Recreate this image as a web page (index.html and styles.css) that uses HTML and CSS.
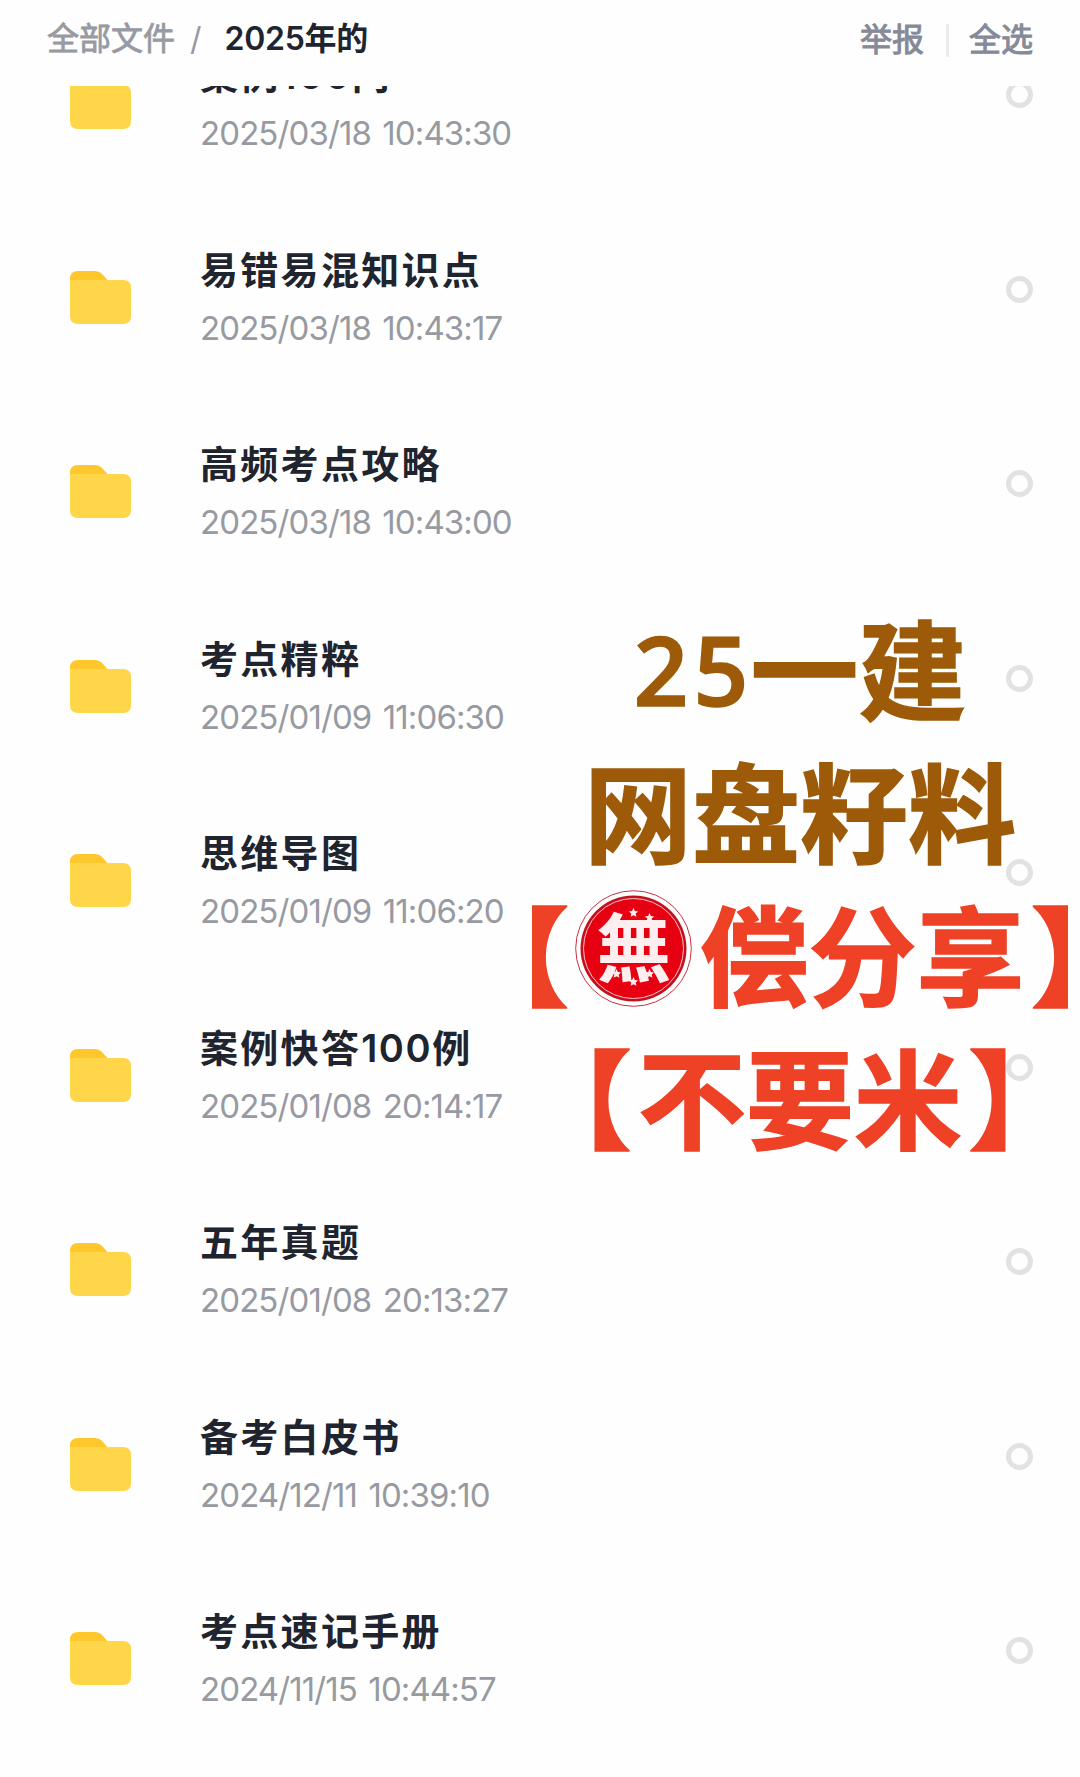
FILE: index.html
```
<!DOCTYPE html>
<html lang="zh-CN">
<head>
    <meta charset="UTF-8">
    <meta name="viewport" content="width=device-width, initial-scale=1.0">
    <title>2025年的</title>
    <link rel="stylesheet" href="styles.css">
</head>
<body>

    <svg class="sprite">
        <symbol id="folder" viewBox="0 0 61 53">
            <path d="M0 20V8Q0 0 8 0H24Q30 0 33 4L40 12V20Z" fill="#ffc72b"/>
            <path d="M0 9H53Q61 9 61 17V45Q61 53 53 53H8Q0 53 0 45Z" fill="#ffd64a"/>
        </symbol>
    </svg>

    <header class="topbar">
        <nav class="crumbs">
            <span class="crumb">全部文件</span>
            <span class="slash">/</span>
            <span class="current">2025年的</span>
        </nav>
        <div class="actions">
            <span>举报</span>
            <i class="divider"></i>
            <span>全选</span>
        </div>
    </header>

    <main class="viewport">
        <ul class="files">
            <li class="file">
                <svg class="folder"><use href="#folder"/></svg>
                <div class="info"><h3>案例<span class="num">100</span>门</h3><p>2025/03/18 10:43:30</p></div>
                <i class="check"></i>
            </li>
            <li class="file">
                <svg class="folder"><use href="#folder"/></svg>
                <div class="info"><h3>易错易混知识点</h3><p>2025/03/18 10:43:17</p></div>
                <i class="check"></i>
            </li>
            <li class="file">
                <svg class="folder"><use href="#folder"/></svg>
                <div class="info"><h3>高频考点攻略</h3><p>2025/03/18 10:43:00</p></div>
                <i class="check"></i>
            </li>
            <li class="file">
                <svg class="folder"><use href="#folder"/></svg>
                <div class="info"><h3>考点精粹</h3><p>2025/01/09 11:06:30</p></div>
                <i class="check"></i>
            </li>
            <li class="file">
                <svg class="folder"><use href="#folder"/></svg>
                <div class="info"><h3>思维导图</h3><p>2025/01/09 11:06:20</p></div>
                <i class="check"></i>
            </li>
            <li class="file">
                <svg class="folder"><use href="#folder"/></svg>
                <div class="info"><h3>案例快答<span class="num">100</span>例</h3><p>2025/01/08 20:14:17</p></div>
                <i class="check"></i>
            </li>
            <li class="file">
                <svg class="folder"><use href="#folder"/></svg>
                <div class="info"><h3>五年真题</h3><p>2025/01/08 20:13:27</p></div>
                <i class="check"></i>
            </li>
            <li class="file">
                <svg class="folder"><use href="#folder"/></svg>
                <div class="info"><h3>备考白皮书</h3><p>2024/12/11 10:39:10</p></div>
                <i class="check"></i>
            </li>
            <li class="file">
                <svg class="folder"><use href="#folder"/></svg>
                <div class="info"><h3>考点速记手册</h3><p>2024/11/15 10:44:57</p></div>
                <i class="check"></i>
            </li>
        </ul>
    </main>

    <div class="promo">
        <div class="line brown"><span class="digits">25</span>一建</div>
        <div class="line brown">网盘籽料</div>
        <div class="line red">
            <span class="open">【</span>
            <svg class="seal" viewBox="0 0 117 117">
                <circle cx="58.5" cy="58.5" r="57.8" fill="#fff" stroke="#c8303c" stroke-width="1"/>
                <circle cx="58.5" cy="58.5" r="53" fill="#c5101c"/>
                <circle cx="58.5" cy="58.5" r="50" fill="#e60012" stroke="#f6c5c8" stroke-width="1"/>
                <text class="seal-text" x="58.7" y="86" text-anchor="middle">無</text>
                <g fill="#fdeef0">
                    <path id="star" d="M58.500 18l1.400 3 3.200.4-2.400 2.200.7 3.200-2.900-1.600-2.900 1.600.7-3.200-2.400-2.200 3.200-.4z"/>
                    <use href="#star" x="16" y="5"/>
                    <use href="#star" x="0" y="69"/>
                    <use href="#star" x="-17" y="61"/>
                    <use href="#star" x="16" y="61"/>
                </g>
            </svg>
            <span>偿分享</span>
            <span class="close">】</span>
        </div>
        <div class="line red">
            <span class="open">【</span>
            <span>不要米</span>
            <span class="close">】</span>
        </div>
    </div>

</body>
</html>
```
FILE: styles.css
```
* {
    box-sizing: border-box;
    margin: 0;
    padding: 0;
}

body {
    width: 1080px;
    height: 1777px;
    position: relative;
    overflow: hidden;
    background: #fefefe;
    font-family: Inter, "Noto Sans CJK SC", sans-serif;
    color: #20242f;
}

.sprite {
    display: none;
}

.topbar {
    display: flex;
    justify-content: space-between;
    align-items: center;
    height: 86px;
    padding: 0 47px 8px 47px;
    font-size: 32px;
    line-height: 40px;
    white-space: nowrap;
}

.crumbs,
.actions {
    display: flex;
    align-items: center;
}

.crumb {
    color: #979aa3;
    -webkit-text-stroke: 0.8px #979aa3;
}

.slash {
    margin: 0 23px 0 15px;
    color: #979aa3;
}

.current {
    font-weight: 600;
    letter-spacing: -0.3px;
}

.actions {
    padding-top: 2px;
    color: #868a98;
    -webkit-text-stroke: 1px #868a98;
}

.divider {
    width: 3px;
    height: 33px;
    margin: 0 20px 0 22px;
    background: #ececee;
}

.viewport {
    height: 1691px;
    overflow: hidden;
}

.files {
    list-style: none;
    margin-top: -48px;
}

.file {
    display: flex;
    align-items: flex-start;
    height: 194.5px;
    padding: 0 47px 0 70px;
}

.folder {
    width: 61px;
    height: 53px;
    margin-top: 38px;
}

.info {
    flex: 1;
    margin-left: 69px;
    padding-top: 15px;
}

.info h3 {
    font-size: 38px;
    line-height: 44px;
    letter-spacing: 2.3px;
    font-weight: 600;
}

.num {
    letter-spacing: 1.6px;
}

.info p {
    margin-top: 16px;
    font-size: 33px;
    line-height: 40px;
    letter-spacing: -0.9px;
    word-spacing: 3px;
    color: #979aa1;
}

.check {
    width: 27px;
    height: 27px;
    margin-top: 43px;
    border: 5px solid #e2e2e2;
    border-radius: 50%;
}

/* надпись поверх списка */
.promo {
    position: absolute;
    left: 520px;
    top: 594px;
    width: 560px;
    font-family: "Noto Sans CJK SC", sans-serif;
    font-weight: 700;
    -webkit-text-stroke-width: 1.5px;
}

.line {
    display: flex;
    justify-content: center;
    align-items: center;
    height: 143px;
    font-size: 108px;
    line-height: 143px;
    white-space: nowrap;
}

.brown {
    color: #9d5b09;
}

.red {
    color: #ee4126;
}

.digits {
    margin-right: -3px;
    padding-top: 6px;
    font-family: "Open Sans", sans-serif;
    font-size: 96px;
    font-weight: 600;
    letter-spacing: 5px;
}

/* скобки в половину ширины */
.open,
.close {
    font-feature-settings: "halt";
}

.open {
    margin: 0 6px 0 -10px;
}

.close {
    margin: 0 -10px 0 6px;
}

.seal {
    flex: none;
    width: 117px;
    height: 117px;
    margin: -6px 8px 0 0;
}

.seal-text {
    font-size: 75px;
    fill: #fdeef0;
}
```
